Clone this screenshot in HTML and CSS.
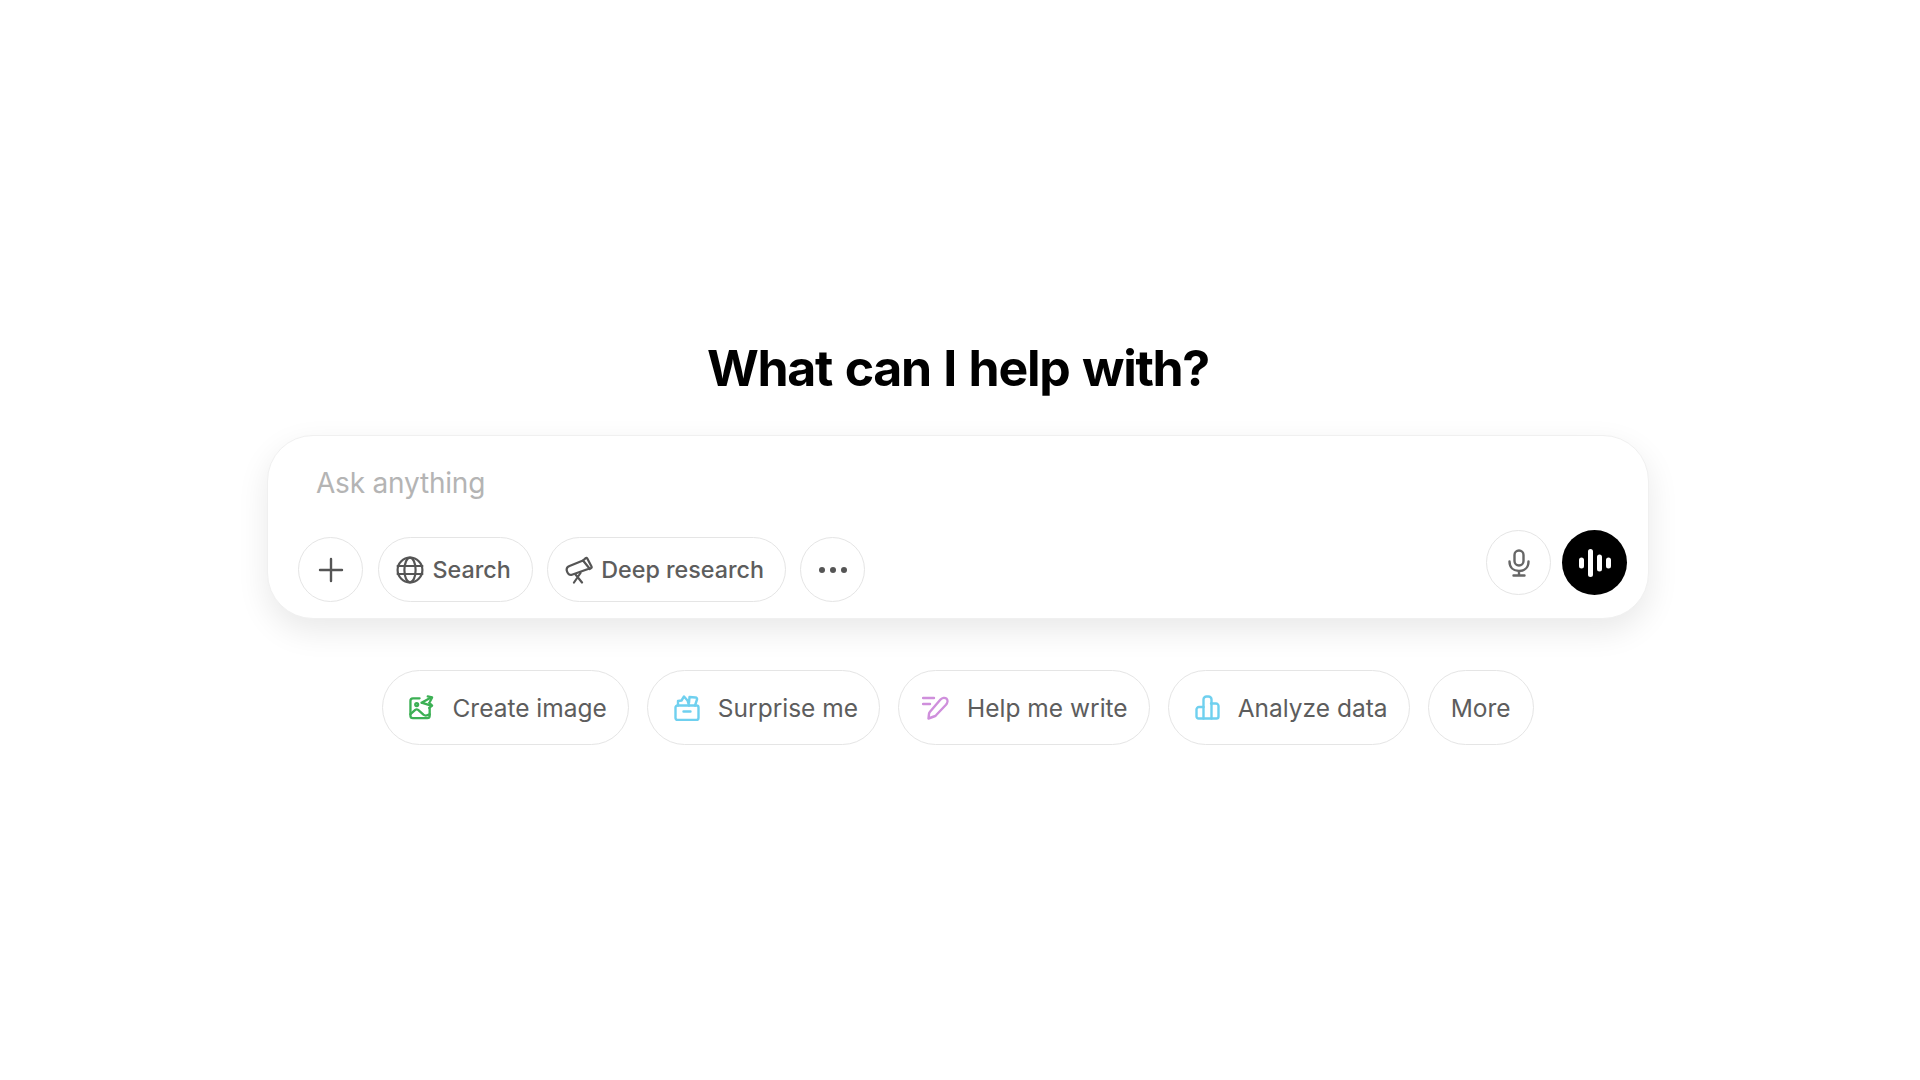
FILE: index.html
```html
<!DOCTYPE html>
<html>
<head>
    <link rel="stylesheet" href="styles.css">
</head>
<body>
    <main class="page">
        <h1 class="title">What can I help with?</h1>

        <div class="composer">
            <div class="placeholder">Ask anything</div>
            <div class="composer-row">
                <div class="tools">
                    <button class="tool round">
                        <svg width="26" height="26" viewBox="0 0 26 26" class="icon"><path d="M13 2v22M2 13h22"/></svg>
                    </button>
                    <button class="tool">
                        <svg width="28" height="28" viewBox="0 0 28 28" class="icon thin"><circle cx="14" cy="14" r="12.4"/><ellipse cx="14" cy="14" rx="5.6" ry="12.4"/><path d="M1.6 10h24.8M1.6 18h24.8"/></svg>
                        Search
                    </button>
                    <button class="tool tool-research">
                        <svg width="28" height="28" viewBox="0 0 28 28" class="icon thin"><path d="M18 4.500l-13.500 5.500c-2.500 1-3.200 3-2.600 5 .6 2.500 2.500 4.500 5 3.800l17.600-6.300z"/><path d="M18 4.500l2.700-2.400c.6-.5 1.300-.3 1.600.3l4.200 8c.3.600.2 1.200-.3 1.600l-1.700 1"/><path d="M10.500 18.500l6.500 8M15.500 17l-6.500 9.500"/></svg>
                        Deep research
                    </button>
                    <button class="tool round">
                        <svg width="30" height="8" viewBox="0 0 30 8"><circle cx="4" cy="4" r="3" class="dot"/><circle cx="15" cy="4" r="3" class="dot"/><circle cx="26" cy="4" r="3" class="dot"/></svg>
                    </button>
                </div>
                <div class="actions">
                    <button class="tool round">
                        <svg width="24" height="28" viewBox="0 0 24 28" class="icon mic"><rect x="7.500" y="1.500" width="9" height="15" rx="4.500"/><path d="M2.500 12.500c0 6 4 9.500 9.500 9.500s9.500-3.500 9.500-9.500M12 22v4.500M6.500 26.500h11"/></svg>
                    </button>
                    <button class="voice">
                        <svg width="36" height="30" viewBox="0 0 36 30" class="bars"><path d="M4.500 12v6M13.500 3.500v23M22.500 9v12M31.500 12v6"/></svg>
                    </button>
                </div>
            </div>
        </div>

        <div class="suggestions">
            <button class="chip">
                <svg width="25" height="25" viewBox="0 0 26 26" class="chip-icon green"><path d="M11 3.500H4a2.500 2.500 0 0 0-2.500 2.500v15.500a2.500 2.500 0 0 0 2.500 2.500h15a2.500 2.500 0 0 0 2.500-2.500v-7.500"/><circle cx="8" cy="10" r="1.500"/><path d="M1.500 20l5-4.500c1-.8 2-.8 3 0l5.500 5c2 1.600 3.500 1.300 6.500-.5"/><path d="M13 8l10-5.500M13 8l10 3"/><path d="M19.500 1.500l4.500 1-2 4M21 8l3 3-3 2.500"/></svg>
                Create image
            </button>
            <button class="chip">
                <svg width="26" height="26" viewBox="0 0 26 26" class="chip-icon blue"><path d="M3.500 10.500h19a2 2 0 0 1 2 2v10.500a2 2 0 0 1-2 2h-19a2 2 0 0 1-2-2v-10.500a2 2 0 0 1 2-2zM9.500 16.500h7"/><path d="M4 10.500v-4.500l3.500-.5 2.500-4 3.500 4 1.500 5M15 8l.5-6 6 .5c1.200.1 1.800.9 1.500 2l-2 6"/></svg>
                Surprise me
            </button>
            <button class="chip chip-write">
                <svg width="27" height="25" viewBox="0 0 27 25" class="chip-icon purple"><path d="M1 3h11M1 9h7"/><path d="M6.500 23.500l.5-4.500c.1-.8.500-1.600 1-2.200l10.500-12.300c1.800-1.800 4.500-2.200 6-.8s1.200 4-.5 6l-10 10.600c-.6.600-1.300 1-2.100 1.200z"/></svg>
                Help me write
            </button>
            <button class="chip">
                <svg width="25" height="25" viewBox="0 0 25 25" class="chip-icon blue"><path d="M3.500 23.500h18a2 2 0 0 0 2-2v-10.500a2.500 2.500 0 0 0-2.500-2.500h-5M8.500 23.500h-5a2 2 0 0 1-2-2v-7a2.500 2.500 0 0 1 2.500-2.500h4.500"/><path d="M8.500 23.500v-19a3 3 0 0 1 3-3h2a3 3 0 0 1 3 3v19"/></svg>
                Analyze data
            </button>
            <button class="chip chip-plain">More</button>
        </div>
    </main>
</body>
</html>
```
FILE: styles.css
```css
* {
    box-sizing: border-box;
}

body {
    margin: 0;
    background-color: #fff;
    font-family: Inter, "Liberation Sans", sans-serif;
    height: 100vh;
    overflow: hidden;
}

button {
    font-family: inherit;
    background: #fff;
    cursor: pointer;
}

.page {
    display: flex;
    flex-direction: column;
    align-items: center;
    padding: 337px 4px 0 0;
}

.title {
    margin: 0 0 36px;
    font-size: 50px;
    line-height: 62px;
    font-weight: 700;
    letter-spacing: -1.3px;
    word-spacing: 2px;
    color: #000;
}

.composer {
    width: 1382px;
    height: 184px;
    padding: 29px 21px 16px 30px;
    background-color: #fff;
    border: 1px solid #f0f0f0;
    border-radius: 46px;
    box-shadow: 0 12px 32px rgba(0, 0, 0, 0.09);
}

.placeholder {
    padding-left: 18px;
    font-size: 28px;
    line-height: 36px;
    letter-spacing: -0.2px;
    color: #b4b4b4;
}

.composer-row {
    display: flex;
    justify-content: space-between;
    margin-top: 29px;
}

.tools {
    display: flex;
    gap: 14.500px;
    margin-top: 7px;
}

.actions {
    display: flex;
    gap: 11px;
}

.tool {
    display: flex;
    align-items: center;
    gap: 9px;
    height: 65px;
    padding: 0 21px 0 17px;
    border: 1px solid #e5e5e5;
    border-radius: 33px;
    font-size: 23.300px;
    font-weight: 500;
    color: #5d5d5d;
}

.tool-research {
    gap: 8px;
    padding-right: 21px;
}

.round {
    justify-content: center;
    width: 65px;
    padding: 0;
}

.icon {
    fill: none;
    stroke: #555;
    stroke-width: 2.400;
    stroke-linecap: round;
    stroke-linejoin: round;
    flex-shrink: 0;
}

.thin {
    stroke-width: 2.200;
}

.mic {
    stroke: #666;
}

.dot {
    fill: #555;
}

.voice {
    display: flex;
    align-items: center;
    justify-content: center;
    width: 65px;
    height: 65px;
    padding: 0;
    border: none;
    border-radius: 50%;
    background-color: #000;
}

.bars {
    fill: none;
    stroke: #fff;
    stroke-width: 5;
    stroke-linecap: round;
}

.suggestions {
    display: flex;
    gap: 18px;
    margin-top: 51px;
}

.chip {
    display: flex;
    align-items: center;
    gap: 18px;
    height: 75px;
    padding: 0 21px 0 26px;
    border: 1px solid #e5e5e5;
    border-radius: 38px;
    font-size: 24.500px;
    font-weight: 400;
    color: #5d5d5d;
}

.chip-write {
    padding-left: 23px;
}

.chip-plain {
    padding: 0 22px;
}

.chip-icon {
    fill: none;
    stroke-width: 2.400;
    stroke-linecap: round;
    stroke-linejoin: round;
    flex-shrink: 0;
}

.green {
    stroke: #3cb054;
}

.blue {
    stroke: #6fd0ef;
}

.purple {
    stroke: #cf8fdc;
}
```
